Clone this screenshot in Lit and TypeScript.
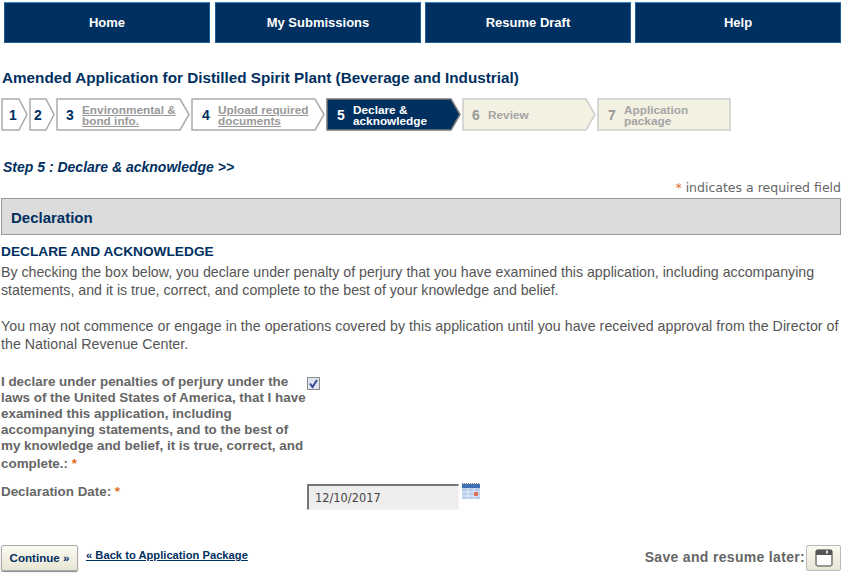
import { LitElement, html, css, svg } from 'lit';
import { customElement } from 'lit/decorators.js';

type Step = { num: string; lines: string[]; width: number; pad: number; state: 'done' | 'current' | 'todo' };

const NAV = ['Home', 'My Submissions', 'Resume Draft', 'Help'];

const STEPS: Step[] = [
  { num: '1', lines: [], width: 27, pad: 8, state: 'done' },
  { num: '2', lines: [], width: 26, pad: 5, state: 'done' },
  { num: '3', lines: ['Environmental &', 'bond info.'], width: 134, pad: 10, state: 'done' },
  { num: '4', lines: ['Upload required', 'documents'], width: 134, pad: 11, state: 'done' },
  { num: '5', lines: ['Declare &', 'acknowledge'], width: 135, pad: 11, state: 'current' },
  { num: '6', lines: ['Review'], width: 134, pad: 10, state: 'todo' },
  { num: '7', lines: ['Application', 'package'], width: 134, pad: 11, state: 'todo' },
];

@customElement('app-root')
export class AppRoot extends LitElement {
  static styles = css`
    :host {
      display: block;
      width: 844px;
      height: 579px;
      overflow: hidden;
      background: #fff;
      font-family: 'Liberation Sans', Arial, sans-serif;
      color: #555;
    }
    .nav {
      display: grid;
      grid-template-columns: 207px 206px 206px 206px;
      column-gap: 4px;
      padding: 2px 3px 0 4px;
    }
    .nav a {
      display: flex;
      align-items: center;
      justify-content: center;
      height: 41px;
      box-sizing: border-box;
      background: #00305f;
      border: 1px solid #1d5c94;
      border-top: 1px solid #3f86c0;
      color: #fff;
      font-size: 13px;
      font-weight: bold;
    }
    .nav a:first-child {
      margin-right: 1px;
    }
    h1 {
      margin: 26px 0 0 2px;
      font-size: 15.27px;
      line-height: 18px;
      font-weight: bold;
      color: #00305f;
    }
    .steps {
      display: flex;
      margin: 11px 0 0 1px;
      height: 33px;
    }
    .step {
      position: relative;
      display: flex;
      align-items: center;
      flex: none;
      box-sizing: border-box;
      height: 33px;
      padding-top: 2px;
      margin-right: 1px;
      font-size: 11.8px;
      font-weight: bold;
      line-height: 11px;
    }
    .step svg {
      position: absolute;
      left: 0;
      top: 0;
    }
    .step .num,
    .step .text {
      position: relative;
    }
    .step .num {
      font-size: 14px;
      color: #00305f;
    }
    .step.wide .num {
      width: 16px;
      flex: none;
    }
    .step.done .text {
      color: #999;
      text-decoration: underline;
    }
    .step.current .num,
    .step.current .text {
      color: #fff;
    }
    .step.todo .num {
      color: #999;
    }
    .step.todo .text {
      color: #a5a5a5;
    }
    .step-title {
      margin: 28px 0 0 3px;
      font-size: 14px;
      line-height: 16px;
      font-weight: bold;
      font-style: italic;
      color: #00305f;
    }
    .required-note {
      margin: 5px 3px 0 0;
      text-align: right;
      font-family: 'DejaVu Sans', Verdana, sans-serif;
      font-size: 12.5px;
      line-height: 16px;
      color: #666;
    }
    .star {
      color: #e0702a;
    }
    .section {
      box-sizing: border-box;
      height: 37px;
      margin: 2px 3px 0 1px;
      padding: 2px 0 0 9px;
      display: flex;
      align-items: center;
      background: #dcdcdc;
      border: 1px solid #999;
      font-size: 15px;
      font-weight: bold;
      color: #00305f;
    }
    h2 {
      margin: 9px 0 0 1px;
      font-size: 13.7px;
      line-height: 16px;
      font-weight: bold;
      color: #00305f;
    }
    p {
      margin: 3px 0 18px 1px;
      width: 840px;
      font-size: 14.2px;
      line-height: 18px;
      color: #555;
    }
    p + p {
      margin-top: 0;
      letter-spacing: 0.04px;
    }
    .form-row {
      display: flex;
      margin-left: 1px;
    }
    .decl-row {
      margin-top: 21px;
    }
    .form-label {
      width: 306px;
      flex: none;
      font-size: 13.4px;
      font-weight: bold;
      line-height: 16px;
      color: #666;
    }
    .last-line {
      display: block;
      margin-top: 2px;
    }
    .check {
      flex: none;
      width: 13px;
      height: 13px;
      margin: 3px 0 0 0;
      display: block;
    }
    .date-row {
      margin-top: 12px;
    }
    .date-input {
      box-sizing: border-box;
      width: 152px;
      height: 26px;
      padding: 0 0 0 6px;
      display: flex;
      align-items: center;
      background: #eee;
      border-top: 2px solid #777;
      border-left: 2px solid #777;
      border-right: 1px solid #f4f4f4;
      border-bottom: 1px solid #f4f4f4;
      font-family: 'DejaVu Sans', Verdana, sans-serif;
      font-size: 11.4px;
      color: #444;
    }
    .cal {
      flex: none;
      width: 18px;
      height: 16px;
      margin: -1px 0 0 3px;
      display: block;
    }
    .footer {
      display: flex;
      align-items: flex-start;
      margin: 35px 3px 0 1px;
    }
    .continue {
      box-sizing: border-box;
      width: 77px;
      height: 26px;
      padding: 0 0 2px;
      display: flex;
      align-items: center;
      justify-content: center;
      border: 1px solid #aaa;
      border-radius: 2px;
      background: linear-gradient(#fbfaf2, #e8e5d4);
      box-shadow: 0 1px 1px #888;
      font-family: inherit;
      font-size: 11.6px;
      font-weight: bold;
      color: #00305f;
    }
    .back {
      margin: 3px 0 0 8px;
      font-size: 11.2px;
      font-weight: bold;
      line-height: 14px;
      color: #00305f;
      text-decoration: underline;
    }
    .save {
      margin-left: auto;
      display: flex;
      align-items: center;
      gap: 1px;
      font-size: 14px;
      font-weight: bold;
      letter-spacing: 0.32px;
      color: #666;
    }
    .save-label {
      margin-top: -2px;
    }
    .save-btn {
      box-sizing: border-box;
      width: 35px;
      height: 26px;
      display: flex;
      align-items: center;
      justify-content: center;
      border: 1px solid #bbb;
      border-radius: 2px;
      background: linear-gradient(#fbfaf2, #e8e5d4);
    }
  `;

  private shape(s: Step) {
    const w = s.width;
    const h = 33;
    const tip = s.lines.length ? 10 : 9;
    const pts = `1,1 ${w - tip},1 ${w - 1},${h / 2} ${w - tip},${h - 1} 1,${h - 1}`;
    const colors = {
      done: ['#fff', '#aaa'],
      current: ['#00305f', '#777'],
      todo: ['#f3f1e2', '#ccc'],
    }[s.state];
    const isLast = s.num === '7';
    return html`<svg width=${w} height=${h} viewBox="0 0 ${w} ${h}">
      ${svg`<polygon points=${isLast ? `1,1 ${w - 1},1 ${w - 1},${h - 1} 1,${h - 1}` : pts} fill=${colors[0]} stroke=${colors[1]} stroke-width="1.5"></polygon>`}
    </svg>`;
  }

  private renderStep(s: Step) {
    return html`<div
      class="step ${s.state} ${s.lines.length ? 'wide' : ''}"
      style="width:${s.width}px;padding-left:${s.pad}px"
    >
      ${this.shape(s)}
      <span class="num">${s.num}</span>
      ${s.lines.length
        ? html`<span class="text">${s.lines.map((l) => html`${l}<br />`)}</span>`
        : ''}
    </div>`;
  }

  render() {
    return html`
      <nav class="nav">${NAV.map((n) => html`<a>${n}</a>`)}</nav>
      <h1>Amended Application for Distilled Spirit Plant (Beverage and Industrial)</h1>
      <div class="steps">${STEPS.map((s) => this.renderStep(s))}</div>
      <div class="step-title">Step 5 : Declare &amp; acknowledge &gt;&gt;</div>
      <div class="required-note"><span class="star">*</span> indicates a required field</div>
      <div class="section">Declaration</div>
      <h2>DECLARE AND ACKNOWLEDGE</h2>
      <p>
        By checking the box below, you declare under penalty of perjury that you have examined this
        application, including accompanying statements, and it is true, correct, and complete to the
        best of your knowledge and belief.
      </p>
      <p>
        You may not commence or engage in the operations covered by this application until you have
        received approval from the Director of the National Revenue Center.
      </p>
      <div class="form-row decl-row">
        <div class="form-label">
          I declare under penalties of perjury under the<br />
          laws of the United States of America, that I have<br />
          examined this application, including<br />
          accompanying statements, and to the best of<br />
          my knowledge and belief, it is true, correct, and<br />
          <span class="last-line">complete.: <span class="star">*</span></span>
        </div>
        <svg class="check" viewBox="0 0 13 13">
          <rect x="0.5" y="0.5" width="12" height="12" fill="#dfe3f0" stroke="#8c8c8c"></rect>
          <path d="M3 6.5 L5.5 10 L10 3" fill="none" stroke="#3a4a96" stroke-width="2"></path>
        </svg>
      </div>
      <div class="form-row date-row">
        <div class="form-label">Declaration Date: <span class="star">*</span></div>
        <div class="date-input">12/10/2017</div>
        <svg class="cal" viewBox="0 0 18 16">
          <rect x="0" y="1" width="18" height="15" fill="#b9cdea"></rect>
          <rect x="0" y="1" width="18" height="4" fill="#3f6fb5"></rect>
          <path d="M0 0.5H18" stroke="#777" stroke-dasharray="1 1"></path>
          <path d="M6 5V16M12 5V16M0 9H18M0 13H18" stroke="#e6eef8"></path>
          <rect x="12" y="9" width="4" height="4" fill="#e0705a"></rect>
        </svg>
      </div>
      <div class="footer">
        <button class="continue">Continue »</button>
        <a class="back">« Back to Application Package</a>
        <div class="save">
          <span class="save-label">Save and resume later:</span>
          <div class="save-btn">
            <svg width="18" height="18" viewBox="0 0 18 18">
              <path d="M2.5 1H15.5L17 2.5V15.5L15.5 17H2.5L1 15.5V2.5Z" fill="#fff" stroke="#777" stroke-width="1.5"></path>
              <rect x="1" y="1" width="16" height="5" fill="#555"></rect>
              <rect x="11" y="1.5" width="2" height="3" fill="#ddd"></rect>
            </svg>
          </div>
        </div>
      </div>
    `;
  }
}
